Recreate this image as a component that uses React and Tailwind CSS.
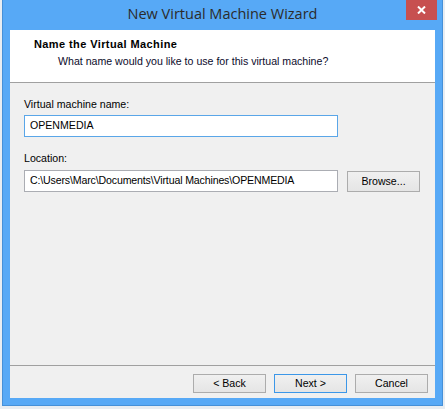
import React from 'react';

const ui = { fontFamily: '"Liberation Sans", Arial, sans-serif' };

const Button = ({ children, focused, className = '' }) => (
  <button
    className={`h-[19px] w-[73px] text-[10.6px] leading-none text-black bg-gradient-to-b from-[#f0f0f0] to-[#e5e5e5] border ${
      focused ? 'border-[#3c97e8]' : 'border-[#acacac]'
    } ${className}`}
    style={ui}
  >
    {children}
  </button>
);

export default function App() {
  return (
    <div className="w-[445px] h-[409px] bg-[#e8edf2] overflow-hidden">
      {/* Window frame */}
      <div className="relative ml-[2px] w-[441px] h-[406px] bg-[#57a9f6] border-x border-b border-[#4590d8] px-[7px] pb-[7px] flex flex-col">
        {/* Title bar */}
        <div className="h-[30px] flex items-center justify-center">
          <span
            className="text-[14.5px] text-[#2b2b2b] -mt-[2px]"
            style={{ fontFamily: '"Open Sans", "Noto Sans", sans-serif' }}
          >
            New Virtual Machine Wizard
          </span>
        </div>
        <button className="absolute top-0 right-[5px] w-[31px] h-[20px] bg-[#c75050] flex items-center justify-center">
          <svg width="9" height="8" viewBox="0 0 9 8">
            <path d="M1 0.5 L8 7.5 M8 0.5 L1 7.5" stroke="#fff" strokeWidth="2" />
          </svg>
        </button>

        {/* Client area */}
        <div className="flex-1 bg-[#f0f0f0] flex flex-col" style={ui}>
          {/* Header */}
          <div className="h-[53px] bg-white border-b border-[#a0a0a0] pl-[24px] pt-[8px]">
            <div className="text-[11px] leading-[13px] font-bold tracking-[0.4px] text-black">Name the Virtual Machine</div>
            <div className="text-[10.6px] leading-[13px] text-[#0b0b2b] pl-[24px] mt-[4px]">
              What name would you like to use for this virtual machine?
            </div>
          </div>

          {/* Body */}
          <div className="flex-1 px-[14px] pt-[15px] text-[10.6px]">
            <div className="leading-[13px] text-black">Virtual machine name:</div>
            <div className="mt-[4px] w-[314px] h-[22px] bg-white border border-[#5aa6e8] pl-[5px] flex items-center text-black">
              OPENMEDIA
            </div>
            <div className="mt-[15px] leading-[13px] text-black">Location:</div>
            <div className="mt-[5px] flex items-start">
              <div className="w-[314px] h-[22px] bg-white border border-[#abadb3] pl-[5px] flex items-center text-black tracking-[-0.15px]">
                C:\Users\Marc\Documents\Virtual Machines\OPENMEDIA
              </div>
              <Button className="ml-[9px] mt-[1px] !h-[21px]">Browse...</Button>
            </div>
          </div>

          {/* Footer */}
          <div className="border-t border-[#a0a0a0] pt-[8px] pb-[5px] pr-[7px] flex justify-end gap-[8px]">
            <Button>&lt; Back</Button>
            <Button focused>Next &gt;</Button>
            <Button>Cancel</Button>
          </div>
        </div>
      </div>
    </div>
  );
}
